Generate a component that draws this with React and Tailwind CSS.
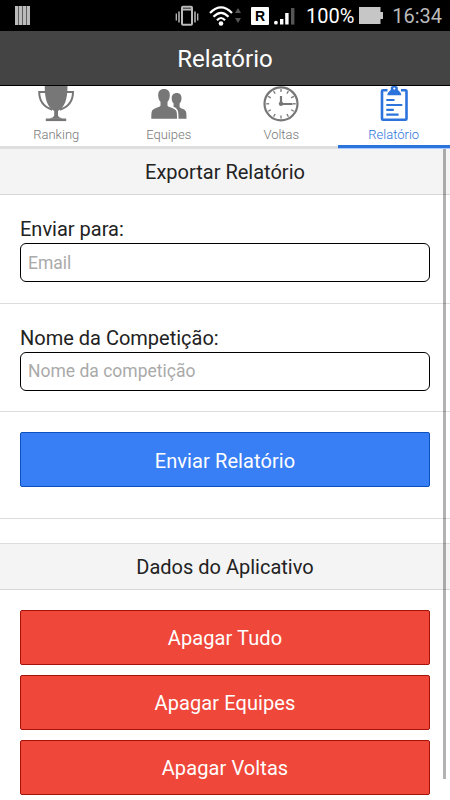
import { useState } from 'react'

const tabs = [
  { id: 'ranking', label: 'Ranking', Icon: TrophyIcon },
  { id: 'equipes', label: 'Equipes', Icon: PeopleIcon },
  { id: 'voltas', label: 'Voltas', Icon: ClockIcon },
  { id: 'relatorio', label: 'Relatório', Icon: ClipboardIcon },
]

export default function App() {
  const [active, setActive] = useState('relatorio')
  const [email, setEmail] = useState('')
  const [nome, setNome] = useState('')

  return (
    <div className="flex flex-col w-[450px] h-[800px] overflow-hidden bg-white text-[#222] font-['Roboto',sans-serif]">
      <StatusBar />
      <header className="h-[55px] shrink-0 bg-[#444] border-b border-black pt-[2px] flex items-center justify-center text-white text-[24px]">
        <h1 className="leading-none">Relatório</h1>
      </header>

      <nav className="grid grid-cols-4 h-[63px] shrink-0">
        {tabs.map((t) => (
          <Tab key={t.id} tab={t} active={active === t.id} onClick={() => setActive(t.id)} />
        ))}
      </nav>

      <main className="relative flex-1 flex flex-col">
        <Divider>Exportar Relatório</Divider>
        <Field label="Enviar para:" placeholder="Email" value={email} onChange={setEmail} />
        <Field label="Nome da Competição:" placeholder="Nome da competição" value={nome} onChange={setNome} />
        <div className="h-[107px] shrink-0 px-5 pt-5 border-b border-[#ddd]">
          <Button className="pt-[2px] bg-[#387ef5] border-[#0c50c0]">Enviar Relatório</Button>
        </div>
        <div className="h-[25px] shrink-0 border-b border-[#ddd]" />
        <Divider>Dados do Aplicativo</Divider>
        <div className="flex flex-col gap-2.5 px-5 pt-5">
          <Button className="bg-[#ef473a] border-[#a5120a]">Apagar Tudo</Button>
          <Button className="bg-[#ef473a] border-[#a5120a]">Apagar Equipes</Button>
          <Button className="bg-[#ef473a] border-[#a5120a]">Apagar Voltas</Button>
        </div>
        {/* scroll indicator */}
        <div className="absolute right-[4px] top-0 w-[3px] h-[630px] bg-black/30" />
      </main>
    </div>
  )
}

function Tab({ tab, active, onClick }) {
  const { Icon, label } = tab
  return (
    <button
      onClick={onClick}
      className={`flex flex-col items-center ${active ? 'text-[#2c73dc]' : 'text-[#777]'}`}
    >
      <Icon />
      <span className="mt-[5px] h-[14px] text-[13px] font-light leading-[15px]">{label}</span>
      <span
        className={`mt-auto w-full ${
          active ? 'h-1 bg-[#2c73dc] border-b border-[#a9cbff]' : 'h-[3px] bg-[#dfdfdf]'
        }`}
      />
    </button>
  )
}

function Divider({ children }) {
  return (
    <h2 className="h-[46px] shrink-0 bg-[#f4f4f4] border-b border-[#d6d6d6] flex items-center justify-center text-[20px]">
      {children}
    </h2>
  )
}

function Field({ label, placeholder, value, onChange }) {
  return (
    <label className="block h-[108.5px] shrink-0 px-5 pt-[22px] border-b border-[#ddd]">
      <span className="block h-[26px] text-[20px] leading-6">{label}</span>
      <input
        value={value}
        onChange={(e) => onChange(e.target.value)}
        placeholder={placeholder}
        className="block w-full h-[39px] px-[7px] border border-black rounded-[6px] text-[17.5px] placeholder:text-[#aaa] outline-none"
      />
    </label>
  )
}

function Button({ className, children }) {
  return (
    <button className={`w-full h-[55px] shrink-0 rounded-[2px] border text-white text-[20px] tracking-[0.1px] flex items-center justify-center ${className}`}>
      {children}
    </button>
  )
}

function StatusBar() {
  return (
    <div className="h-[31px] shrink-0 bg-black flex items-center pl-[15px] pr-[8px] text-white">
      <svg width="15" height="19" viewBox="0 0 15 19" fill="#bbb">
        <path d="M0 0h15v19H0z" opacity=".5" />
        <path d="M0 0h3v19H0zM4 0h3v19H4zM8 0h3v19H8zM12 0h3v19h-3z" />
      </svg>
      <svg className="ml-[145px]" width="24" height="22" viewBox="0 0 24 22" fill="none" stroke="#bbb">
        <rect x="7" y="1.8" width="10" height="18" rx="1" strokeWidth="2" />
        <path d="M7 4.500h10" strokeWidth="2" />
        <path d="M4 6.500v11M20 6.500v11" strokeWidth="1.500" />
        <path d="M1.300 8.500v7M22.700 8.500v7" strokeWidth="1.300" />
      </svg>
      <svg className="ml-[10px]" width="24" height="20" viewBox="0 0 24 20" fill="none" stroke="#fff" strokeWidth="2.2">
        <path d="M1 7Q12-4 23 7M4.500 10.800Q12 3 19.500 10.800M8 14.200Q12 9.800 16 14.200" />
        <circle cx="12" cy="17.500" r="2.300" fill="#fff" stroke="none" />
      </svg>
      <svg className="ml-[2px]" width="6" height="15" viewBox="0 0 6 15" fill="#555">
        <path d="M3 0l3 5H0zM3 15l3-5H0z" />
      </svg>
      <span className="ml-[10px] w-[18px] h-[18px] rounded-[1px] bg-white text-black font-['Liberation_Sans',sans-serif] text-[14px] font-bold leading-none flex items-center justify-center">
        R
      </span>
      <svg className="ml-[5px]" width="21" height="18" viewBox="0 0 21 18" fill="#fff">
        <circle cx="1.900" cy="15.700" r="1.900" />
        <path d="M6 12h3.400v5.600H6zM11.200 6h3.400v11.600h-3.400z" />
        <path d="M17 1h3.400v16.600H17z" fill="#555" />
      </svg>
      <span className="ml-[11px] w-[48px] text-[20px] leading-none whitespace-nowrap">100%</span>
      <svg className="ml-[5px]" width="24" height="17" viewBox="0 0 24 17" fill="#c6c6c6">
        <path d="M0 0h21.500v5H24v7h-2.500v5H0z" />
      </svg>
      <span className="ml-auto text-[20px] leading-none text-[#bbb]">16:34</span>
    </div>
  )
}

function TrophyIcon() {
  return (
    <svg width="40" height="36" viewBox="0 0 40 36" fill="currentColor">
      <path d="M8.700 0h22.800c0 13-2.500 21-9.500 25v4.500c.3 1.700 2.700 2.300 4.700 3.200H13.500c2-.9 4.400-1.500 4.700-3.200V25C11.200 21 8.700 13 8.700 0z" />
      <path d="M9.800 32.500h20.400v2.600H9.800z" />
      <path d="M9.500 6H3.200c0 9 5 15 13 17.700M30.700 6H37c0 9-5 15-13 17.700" fill="none" stroke="currentColor" strokeWidth="2" />
    </svg>
  )
}

function PeopleIcon() {
  return (
    <svg width="40" height="36" viewBox="0 0 40 36" fill="currentColor">
      <path d="M15 3c4 0 6 2.600 5.800 6.400-.1 3-1 4.800-2.300 6.400v4c1.500 2 8.200 2.300 9 5.700.5 2 .5 4.500.5 7.300H2.300c0-2.800 0-5.300.5-7.300.8-3.400 7.200-3.700 8.700-5.700v-4C10.200 14.200 9.300 12.400 9.200 9.400 9 5.600 11 3 15 3z" />
      <path d="M27.800 7c3.200 0 4.800 2.200 4.700 5.200-.1 2.500-.8 4.100-1.900 5.300v3.600c1.300 1.900 5.900 2 6.500 5 .4 1.800.4 4.200.4 6.700h-8c0-3 0-6-.8-8.300-.7-2-2.600-3.200-4.500-4 .3-.3.400-.8.400-1.200v-1.800c-1.100-1.200-1.900-2.800-1.900-5.300C22.600 9.200 24.600 7 27.800 7z" />
    </svg>
  )
}

function ClockIcon() {
  const ticks = Array.from({ length: 12 }, (_, i) => i * 30)
  return (
    <svg width="40" height="36" viewBox="0 0 40 36" fill="none" stroke="currentColor">
      <circle cx="20" cy="17.800" r="16.500" strokeWidth="2.200" />
      {ticks.map((a) => (
        <path key={a} d="M20 3v3" strokeWidth="1.300" transform={`rotate(${a} 20 17.800)`} />
      ))}
      <path d="M20 10v8h11.500" strokeWidth="2.200" />
      <circle cx="20" cy="17.800" r="2.200" fill="currentColor" stroke="none" />
    </svg>
  )
}

function ClipboardIcon() {
  return (
    <svg width="40" height="36" viewBox="0 0 40 36" fill="none" stroke="currentColor">
      <path d="M13.500 4.200H9a1 1 0 0 0-1 1v27.600a1 1 0 0 0 1 1h22.500a1 1 0 0 0 1-1V5.200a1 1 0 0 0-1-1H27" strokeWidth="2.600" />
      <path
        d="M16.800 1.500C17.300.3 18.400 0 20.300 0s3 .3 3.500 1.500v2.300c.8 1.700 3.400 2 3.400 5.500H13.400c0-3.500 2.600-3.800 3.400-5.500z"
        fill="currentColor"
        stroke="none"
      />
      <circle cx="20.300" cy="2.600" r="1.100" fill="#fff" stroke="none" />
      <path d="M12.300 14h8.200M12.300 19h16M12.300 23.800h7.500M12.300 28.700h12.300" strokeWidth="2.200" />
    </svg>
  )
}
